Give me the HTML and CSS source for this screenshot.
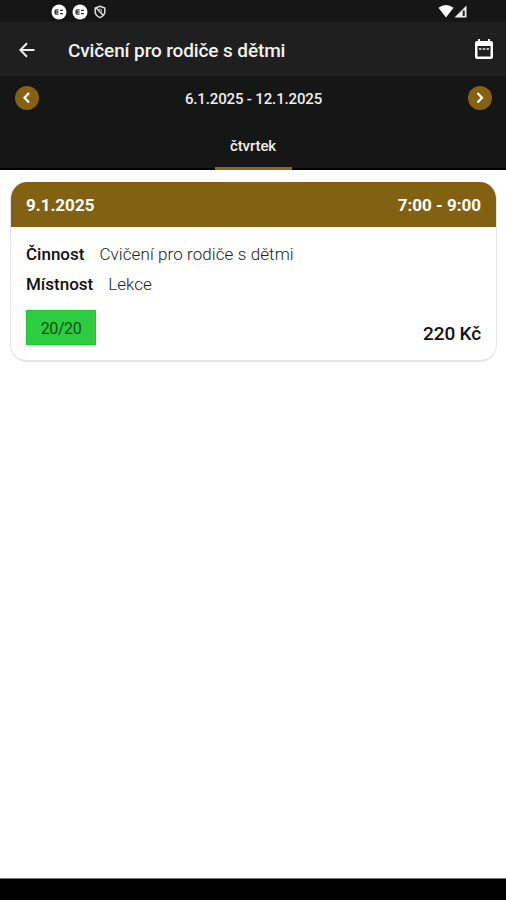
FILE: index.html
```html
<!DOCTYPE html>
<html lang="cs">
<head>
<meta charset="utf-8">
<title>Cvičení pro rodiče s dětmi</title>
<link rel="stylesheet" href="styles.css">
</head>
<body>
<div class="screen">
  <div class="status">
    <div class="status-left">
      <svg width="16" height="16" viewBox="0 0 16 16"><circle cx="8" cy="8" r="7.5" fill="#fff"/><path d="M7.500 5.800H5.500Q4 5.800 4 8t1.500 2.200h2M4.500 8h3M9 6.300h3M9 9.700h3" fill="none" stroke="#333" stroke-width="1.300"/></svg>
      <svg width="16" height="16" viewBox="0 0 16 16"><circle cx="8" cy="8" r="7.5" fill="#fff"/><path d="M7.500 5.800H5.500Q4 5.800 4 8t1.500 2.200h2M4.500 8h3M9 6.300h3M9 9.700h3" fill="none" stroke="#333" stroke-width="1.300"/></svg>
      <svg class="shield" width="12" height="14" viewBox="0 0 12 14"><path d="M6 1.200 10.800 3v3.600c0 2.800-2 5-4.800 6-2.800-1-4.800-3.200-4.800-6V3zM2.300 3l7 7.500" fill="none" stroke="#ddd" stroke-width="1.500"/><path d="M4.600 4.300h2.800v3" fill="none" stroke="#bbb"/></svg>
    </div>
    <div class="status-right">
      <svg width="16" height="13" viewBox="0 0 16 13"><path d="M.5 2.700Q8-2.500 15.500 2.700L8 12.500z" fill="#fff"/></svg>
      <svg width="13" height="13" viewBox="0 0 13 13"><path d="M12.500.5v12H.5z" fill="#eee"/><path d="M9.700 5.500v5.500" stroke="#222" stroke-width="2"/></svg>
    </div>
  </div>
  <header class="appbar">
    <svg class="back" width="16" height="16" viewBox="0 0 16 16"><path d="M15.500 8H1.500M8 1.300 1.300 8 8 14.700" fill="none" stroke="#eee" stroke-width="2"/></svg>
    <h1 class="title">Cvičení pro rodiče s dětmi</h1>
    <svg class="calendar" width="18" height="20" viewBox="0 0 18 20"><path d="M2 2H3V0h2v2h8V0h2v2h1q2 0 2 2v14q0 2-2 2H2q-2 0-2-2V4q0-2 2-2zm.5 5v10.500h13V7z" fill="#fff" fill-rule="evenodd"/><path d="M4 10h10" stroke="#bbb" stroke-width="2" stroke-dasharray="2.500 1.250"/></svg>
  </header>
  <nav class="week">
    <button class="round" aria-label="Předchozí"><svg width="24" height="24" viewBox="0 0 24 24"><path d="m14 7-4.500 4.800L14 16.500" fill="none" stroke="#fff" stroke-width="2.200"/></svg></button>
    <span class="range">6.1.2025 - 12.1.2025</span>
    <button class="round" aria-label="Další"><svg width="24" height="24" viewBox="0 0 24 24"><path d="m9.500 7 4.500 4.800L9.500 16.500" fill="none" stroke="#fff" stroke-width="2.200"/></svg></button>
  </nav>
  <div class="tabs"><div class="tab"><span class="tab-label">čtvrtek</span></div></div>
  <main class="content">
    <article class="card">
      <div class="card-head"><span class="date">9.1.2025</span><span class="time">7:00 - 9:00</span></div>
      <div class="card-body">
        <div class="row"><span class="label">Činnost</span><span class="value lesson">Cvičení pro rodiče s dětmi</span></div>
        <div class="row"><span class="label">Místnost</span><span class="value">Lekce</span></div>
        <div class="bottom"><span class="badge">20/20</span><span class="price">220 Kč</span></div>
      </div>
    </article>
  </main>
  <div class="system"></div>
</div>
</body>
</html>
```
FILE: styles.css
```css
* { box-sizing: border-box; }
body { margin: 0; font-family: Roboto, sans-serif; background: #fff; }
svg { display: block; }
.screen { width: 506px; height: 900px; display: flex; flex-direction: column; overflow: hidden; }
.status { height: 22px; flex: none; background: #161616; display: flex; justify-content: space-between; padding: 4px 39px 0 51px; }
.status-left { display: flex; gap: 5px; }
.shield { margin: 1px 0 0 1px; }
.status-right { display: flex; padding-top: 1px; }
.appbar { height: 54px; flex: none; background: #1f1f1f; display: flex; align-items: center; padding: 0 13px 0 19px; }
.back { margin-top: 1px; }
.title { margin: 3px 0 0 33px; font-size: 19px; font-weight: 500; line-height: 24px; letter-spacing: -0.12px; color: #f2f2f2; white-space: nowrap; }
.calendar { margin-left: auto; }
.week { height: 44px; flex: none; background: #161616; display: flex; align-items: center; justify-content: space-between; padding: 0 14px 0 15px; }
.round { width: 24px; height: 24px; padding: 0; border: 0; border-radius: 50%; background: #856112; }
.range { margin-top: 2px; font-size: 15px; font-weight: 500; letter-spacing: -0.15px; color: #eee; }
.tabs { height: 50px; flex: none; background: #161616; border-bottom: 2px solid #000; display: flex; justify-content: center; }
.tab { width: 77px; height: 50px; border-bottom: 3px solid #8b691f; text-align: center; padding-top: 17px; line-height: 18px; font-size: 15px; font-weight: 500; letter-spacing: -0.1px; color: #eee; }
.content { flex: 1; padding: 12px 9px 0 10px; background: #fff; }
.card { height: 180px; border: 1px solid #e6e6e6; border-width: 0 1px 2px; border-radius: 17px; overflow: hidden; }
.card-head { height: 45px; padding: 1px 15px 0; background: #836112; color: #fff; display: flex; justify-content: space-between; align-items: center; font-size: 17px; font-weight: 700; }
.card-body { padding: 12px 15px 0; }
.row { display: flex; height: 30px; align-items: center; gap: 15px; font-size: 17px; }
.label { font-weight: 500; color: #111; }
.value { font-weight: 300; color: #222; }
.lesson { letter-spacing: 0.09px; }
.bottom { display: flex; justify-content: space-between; align-items: flex-start; margin-top: 11px; }
.badge { width: 70px; height: 35px; padding-top: 1px; background: #2ecc40; border: 1px solid #15cf22; color: #10501a; display: flex; align-items: center; justify-content: center; font-size: 16px; letter-spacing: -0.4px; }
.price { margin-top: 12px; font-size: 19px; line-height: 24px; font-weight: 500; letter-spacing: -0.15px; color: #111; }
.system { height: 22px; flex: none; background: #000; border-top: 1px solid #777; }
```
